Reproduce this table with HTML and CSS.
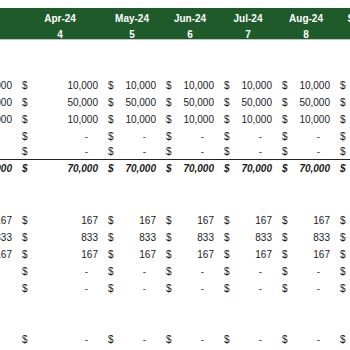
FILE: index.html
```html
<!DOCTYPE html>
<html>
<head>
<meta charset="utf-8">
<link rel="stylesheet" href="styles.css">
</head>
<body>
<div class="sheet">
  <div class="head">
    <div class="row hrow1">
      <div class="hc"></div><div class="hc">Apr-24</div><div class="hc">May-24</div><div class="hc">Jun-24</div><div class="hc">Jul-24</div><div class="hc">Aug-24</div><div class="hc">Sep-24</div>
    </div>
    <div class="row hrow2">
      <div class="hc"></div><div class="hc">4</div><div class="hc">5</div><div class="hc">6</div><div class="hc">7</div><div class="hc">8</div><div class="hc">9</div>
    </div>
  </div>

  <div class="gap1"></div>

  <div class="row r"><div class="c"><span>$</span><span>10,000</span></div><div class="c"><span>$</span><span>10,000</span></div><div class="c"><span>$</span><span>10,000</span></div><div class="c"><span>$</span><span>10,000</span></div><div class="c"><span>$</span><span>10,000</span></div><div class="c"><span>$</span><span>10,000</span></div><div class="c"><span>$</span><span>10,000</span></div></div>
  <div class="row r"><div class="c"><span>$</span><span>50,000</span></div><div class="c"><span>$</span><span>50,000</span></div><div class="c"><span>$</span><span>50,000</span></div><div class="c"><span>$</span><span>50,000</span></div><div class="c"><span>$</span><span>50,000</span></div><div class="c"><span>$</span><span>50,000</span></div><div class="c"><span>$</span><span>50,000</span></div></div>
  <div class="row r"><div class="c"><span>$</span><span>10,000</span></div><div class="c"><span>$</span><span>10,000</span></div><div class="c"><span>$</span><span>10,000</span></div><div class="c"><span>$</span><span>10,000</span></div><div class="c"><span>$</span><span>10,000</span></div><div class="c"><span>$</span><span>10,000</span></div><div class="c"><span>$</span><span>10,000</span></div></div>
  <div class="row r"><div class="c"></div><div class="c"><span>$</span><span class="d">-</span></div><div class="c"><span>$</span><span class="d">-</span></div><div class="c"><span>$</span><span class="d">-</span></div><div class="c"><span>$</span><span class="d">-</span></div><div class="c"><span>$</span><span class="d">-</span></div><div class="c"><span>$</span><span class="d">-</span></div></div>
  <div class="row r short"><div class="c"></div><div class="c"><span>$</span><span class="d">-</span></div><div class="c"><span>$</span><span class="d">-</span></div><div class="c"><span>$</span><span class="d">-</span></div><div class="c"><span>$</span><span class="d">-</span></div><div class="c"><span>$</span><span class="d">-</span></div><div class="c"><span>$</span><span class="d">-</span></div></div>
  <div class="row r total"><div class="c"><span>$</span><span>70,000</span></div><div class="c"><span>$</span><span>70,000</span></div><div class="c"><span>$</span><span>70,000</span></div><div class="c"><span>$</span><span>70,000</span></div><div class="c"><span>$</span><span>70,000</span></div><div class="c"><span>$</span><span>70,000</span></div><div class="c"><span>$</span><span>70,000</span></div></div>

  <div class="gap2"></div>

  <div class="row r"><div class="c"><span>$</span><span>167</span></div><div class="c"><span>$</span><span>167</span></div><div class="c"><span>$</span><span>167</span></div><div class="c"><span>$</span><span>167</span></div><div class="c"><span>$</span><span>167</span></div><div class="c"><span>$</span><span>167</span></div><div class="c"><span>$</span><span>167</span></div></div>
  <div class="row r"><div class="c"><span>$</span><span>833</span></div><div class="c"><span>$</span><span>833</span></div><div class="c"><span>$</span><span>833</span></div><div class="c"><span>$</span><span>833</span></div><div class="c"><span>$</span><span>833</span></div><div class="c"><span>$</span><span>833</span></div><div class="c"><span>$</span><span>833</span></div></div>
  <div class="row r"><div class="c"><span>$</span><span>167</span></div><div class="c"><span>$</span><span>167</span></div><div class="c"><span>$</span><span>167</span></div><div class="c"><span>$</span><span>167</span></div><div class="c"><span>$</span><span>167</span></div><div class="c"><span>$</span><span>167</span></div><div class="c"><span>$</span><span>167</span></div></div>
  <div class="row r"><div class="c"></div><div class="c"><span>$</span><span class="d">-</span></div><div class="c"><span>$</span><span class="d">-</span></div><div class="c"><span>$</span><span class="d">-</span></div><div class="c"><span>$</span><span class="d">-</span></div><div class="c"><span>$</span><span class="d">-</span></div><div class="c"><span>$</span><span class="d">-</span></div></div>
  <div class="row r"><div class="c"></div><div class="c"><span>$</span><span class="d">-</span></div><div class="c"><span>$</span><span class="d">-</span></div><div class="c"><span>$</span><span class="d">-</span></div><div class="c"><span>$</span><span class="d">-</span></div><div class="c"><span>$</span><span class="d">-</span></div><div class="c"><span>$</span><span class="d">-</span></div></div>
  <div class="row r"></div>
  <div class="row r"></div>
  <div class="row r"><div class="c"></div><div class="c"><span>$</span><span class="d">-</span></div><div class="c"><span>$</span><span class="d">-</span></div><div class="c"><span>$</span><span class="d">-</span></div><div class="c"><span>$</span><span class="d">-</span></div><div class="c"><span>$</span><span class="d">-</span></div><div class="c"><span>$</span><span class="d">-</span></div></div>
  <div class="row r"><div class="c"></div><div class="c"><span>$</span><span class="d">-</span></div><div class="c"><span>$</span><span class="d">-</span></div><div class="c"><span>$</span><span class="d">-</span></div><div class="c"><span>$</span><span class="d">-</span></div><div class="c"><span>$</span><span class="d">-</span></div><div class="c"><span>$</span><span class="d">-</span></div></div>
</div>
</body>
</html>
```

FILE: styles.css
```css
html, body {
  margin: 0;
  padding: 0;
  background: #ffffff;
}
body {
  width: 350px;
  height: 350px;
  overflow: hidden;
  font-family: "Liberation Sans", Arial, sans-serif;
  font-size: 10px;
  color: #1a1a1a;
}
.sheet {
  padding-top: 8px;
  margin-left: -41px;
  width: 391px;
  overflow: hidden;
}
.row {
  display: grid;
  grid-template-columns: 58px 86px 58px 58px 58px 58px 58px;
}
.head {
  background: #1f5a2b;
  color: #ffffff;
  font-weight: bold;
  border-bottom: 1px solid #b9c9bc;
}
.hc {
  text-align: center;
  white-space: nowrap;
}
.hrow1 {
  height: 20px;
  line-height: 21px;
}
.hrow2 {
  height: 11px;
  line-height: 14px;
}
.gap1 {
  height: 37px;
}
.gap2 {
  height: 35px;
}
.r {
  height: 17px;
  line-height: 17px;
}
.r.short {
  height: 14px;
  line-height: 14px;
}
.c {
  display: flex;
  justify-content: space-between;
  padding: 0 5px 0 5px;
}
.d {
  padding-right: 10px;
  color: #444;
}
.total {
  border-top: 1px solid #222;
  font-weight: bold;
  font-style: italic;
}
```
